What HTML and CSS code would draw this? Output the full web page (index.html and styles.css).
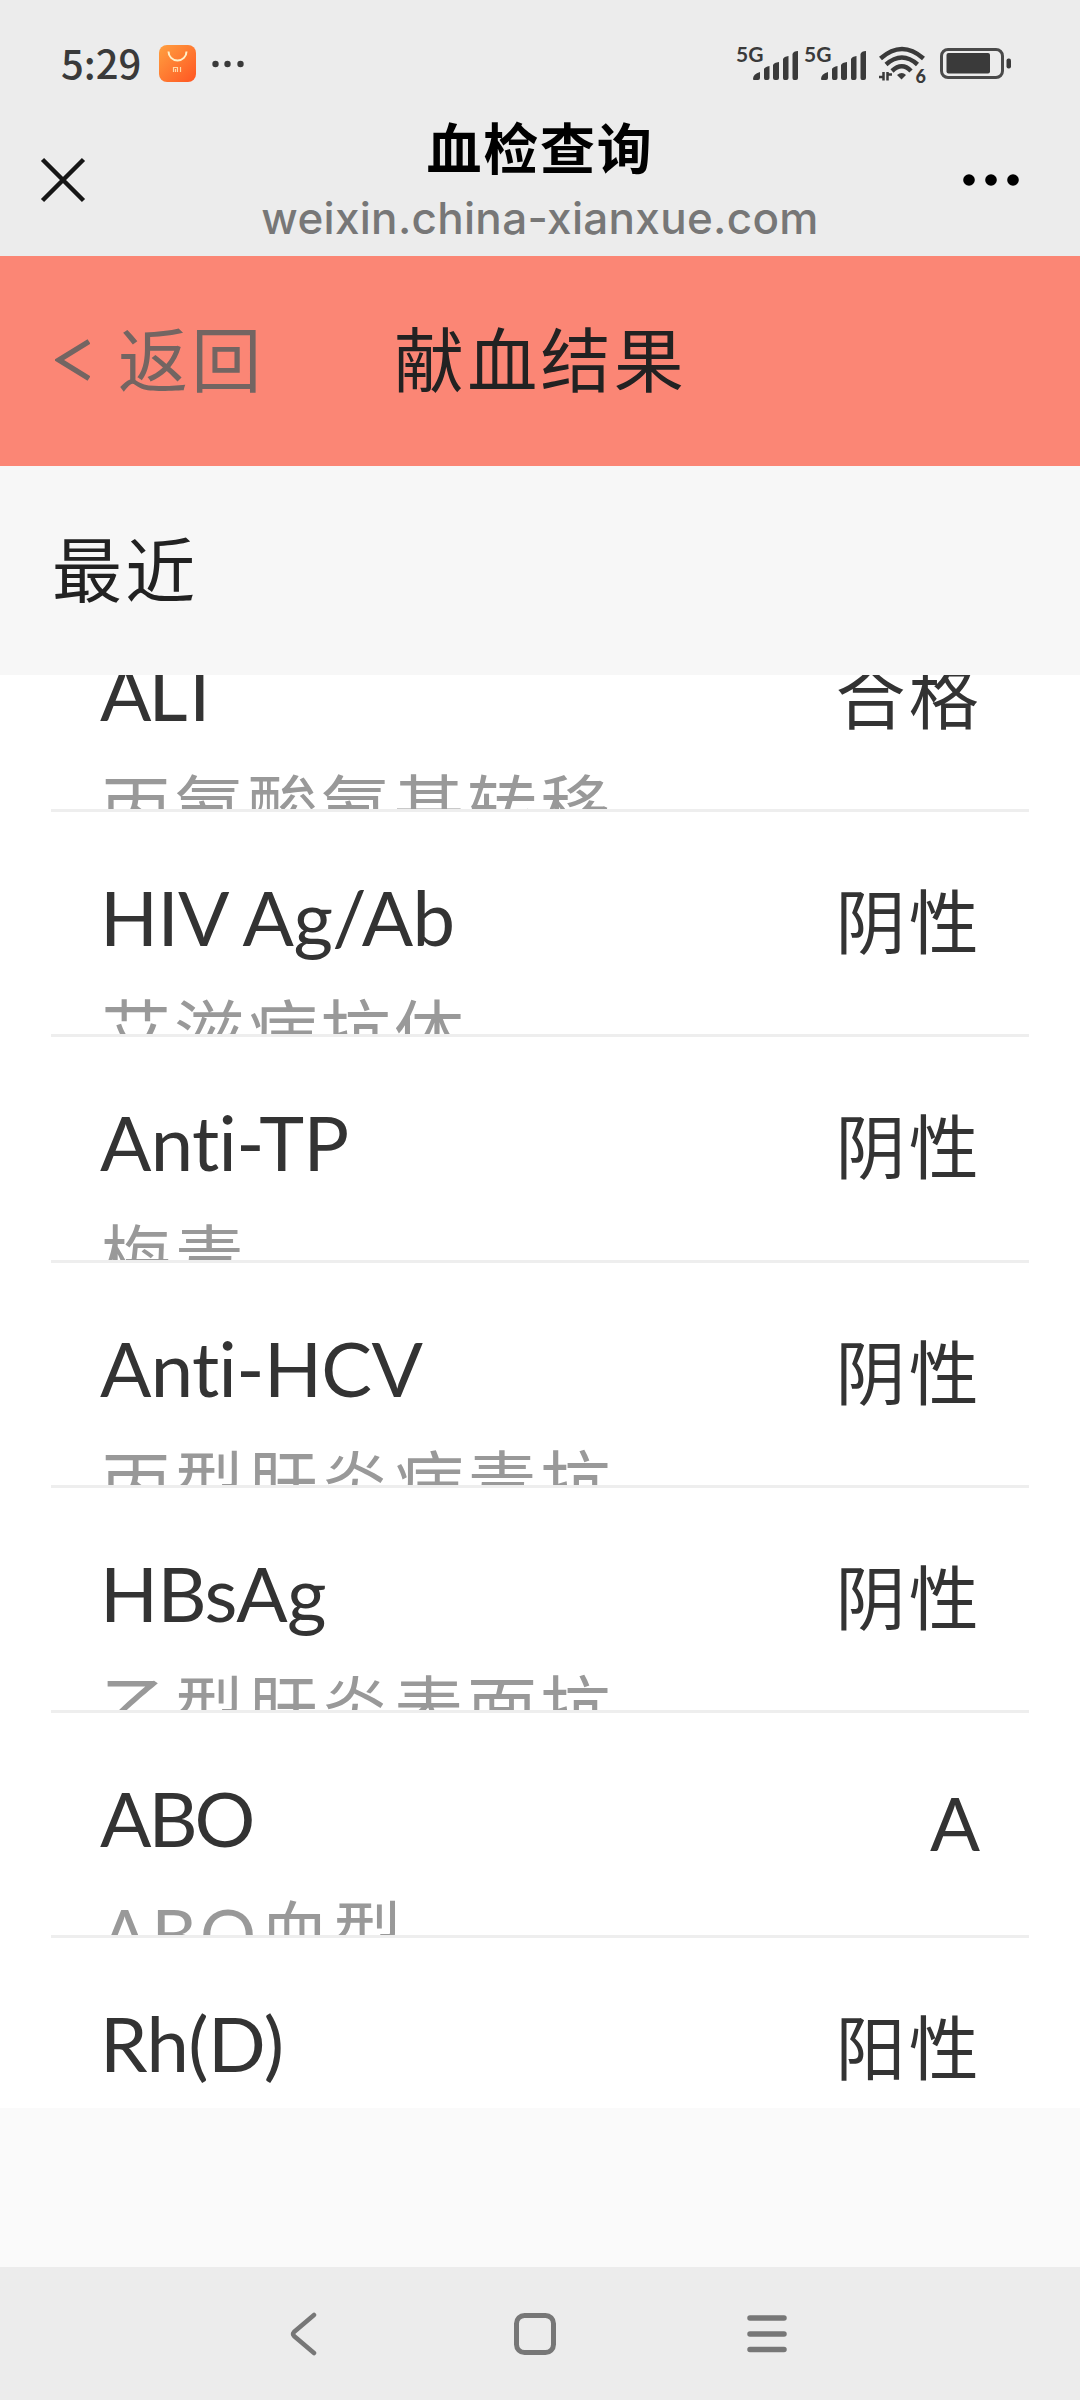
FILE: index.html
```html
<!DOCTYPE html>
<html lang="zh-CN">
<head>
    <meta charset="UTF-8">
    <meta name="viewport" content="width=device-width, initial-scale=1.0">
    <title>血检查询</title>
    <link rel="stylesheet" href="styles.css">
</head>
<body>
    <div class="status-bar">
        <span class="time">5:29</span>
        <svg class="app-icon" width="37" height="37" viewBox="0 0 37 37">
            <defs>
                <linearGradient id="orange" x1="0" y1="0" x2="1" y2="1">
                    <stop offset="0" stop-color="#ffa040"/>
                    <stop offset="1" stop-color="#ff5522"/>
                </linearGradient>
            </defs>
            <rect width="37" height="37" rx="8" fill="url(#orange)"/>
            <path d="M9.5 6.5a9 9 0 0 0 18 0" fill="none" stroke="#fff0c8" stroke-width="2"/>
            <path d="M14.5 27v-4.500h4v4.500M16.500 24v3M21.500 22v5" fill="none" stroke="#ffd9a8" stroke-width="1.200"/>
        </svg>
        <svg class="more-icon" width="32" height="8" viewBox="0 0 32 8" fill="#3a3a3a">
            <circle cx="3.500" cy="4" r="3.200"/><circle cx="15.500" cy="4" r="3.200"/><circle cx="28.500" cy="4" r="3.200"/>
        </svg>
        <div class="status-right">
            <div class="signal">
                <span>5G</span>
                <svg width="46" height="30" viewBox="0 0 46 30" fill="#3a3a3a">
                    <path d="M0 28q0-5 7-7v6q0 2-2 2H1q-1 0-1-1zM11 18q1-2 5.500-3v12q0 2-2 2h-2q-1.500 0-1.500-2zM20 14q1-2.500 6-3v16q0 2-2 2h-2q-2 0-2-2zM30 8q1-2.500 5.500-3v22q0 2-2 2h-2q-1.500 0-1.500-2zM39.500 3q1-3 5.500-3v27q0 2-2 2h-2q-1.500 0-1.500-2z"/>
                </svg>
            </div>
            <div class="signal">
                <span>5G</span>
                <svg width="46" height="30" viewBox="0 0 46 30" fill="#3a3a3a">
                    <path d="M0 28q0-5 7-7v6q0 2-2 2H1q-1 0-1-1zM11 18q1-2 5.500-3v12q0 2-2 2h-2q-1.500 0-1.500-2zM20 14q1-2.500 6-3v16q0 2-2 2h-2q-2 0-2-2zM30 8q1-2.500 5.500-3v22q0 2-2 2h-2q-1.500 0-1.500-2zM39.500 3q1-3 5.500-3v27q0 2-2 2h-2q-1.500 0-1.500-2z"/>
                </svg>
            </div>
            <div class="wifi">
                <svg width="46" height="36" viewBox="0 0 46 36">
                    <g fill="none" stroke="#3a3a3a" stroke-width="4.500">
                        <path d="M1.500 12.500Q23-6.500 44.500 12.500"/>
                        <path d="M7 18.500Q23 4.500 38.500 18.500"/>
                        <path d="M13 25Q23 15.500 32 25"/>
                    </g>
                    <path d="M18 29q5-4 9 0l-4.500 4.500z" fill="#3a3a3a"/>
                    <path d="M4.500 26v8.500M0 31h5M8.500 26v8.500M8 28.500h5" stroke="#3a3a3a" stroke-width="2.500"/>
                </svg>
                <span>6</span>
            </div>
            <svg width="71" height="32" viewBox="0 0 71 32">
                <rect x="1.500" y="1.500" width="61" height="28" rx="6.500" fill="none" stroke="#4a4a4a" stroke-width="3"/>
                <rect x="6.500" y="5" width="43.500" height="20.500" rx="2" fill="#3a3a3a"/>
                <rect x="66.500" y="10.500" width="4.500" height="10" rx="2" fill="#3a3a3a"/>
            </svg>
        </div>
    </div>

    <div class="title-bar">
        <svg width="46" height="46" viewBox="0 0 46 46">
            <path d="M2.500 2.500l41 41M43.500 2.500l-41 41" stroke="#161616" stroke-width="4.500"/>
        </svg>
        <div class="title-text">
            <h1>血检查询</h1>
            <p>weixin.china-xianxue.com</p>
        </div>
        <svg width="58" height="14" viewBox="0 0 58 14">
            <circle cx="7" cy="7" r="5.800"/><circle cx="29" cy="7" r="5.800"/><circle cx="51" cy="7" r="5.800"/>
        </svg>
    </div>

    <div class="nav-header">
        <a class="back"><svg width="35" height="42" viewBox="0 0 35 42"><path d="M34 2.500L4 21l30 18.500" fill="none" stroke="#736562" stroke-width="5.500"/></svg>返回</a>
        <h2>献血结果</h2>
    </div>

    <div class="section">最近</div>

    <div class="list">
        <ul class="results">
            <li>
                <div class="item"><p class="name tight">ALT</p><p class="desc">丙氨酸氨基转移</p></div>
                <span class="value">合格</span>
            </li>
            <li>
                <div class="item"><p class="name">HIV Ag/Ab</p><p class="desc">艾滋病抗体</p></div>
                <span class="value">阴性</span>
            </li>
            <li>
                <div class="item"><p class="name">Anti-TP</p><p class="desc">梅毒</p></div>
                <span class="value">阴性</span>
            </li>
            <li>
                <div class="item"><p class="name">Anti-HCV</p><p class="desc">丙型肝炎病毒抗</p></div>
                <span class="value">阴性</span>
            </li>
            <li>
                <div class="item"><p class="name">HBsAg</p><p class="desc">乙型肝炎表面抗</p></div>
                <span class="value">阴性</span>
            </li>
            <li>
                <div class="item"><p class="name tight">ABO</p><p class="desc">ABO血型</p></div>
                <span class="value latin">A</span>
            </li>
            <li>
                <div class="item"><p class="name">Rh(D)</p></div>
                <span class="value">阳性</span>
            </li>
        </ul>
    </div>

    <div class="system-nav">
        <svg width="28" height="44" viewBox="0 0 28 44"><path d="M25 3L5 20q-2 2 0 4l20 17" fill="none" stroke="#777" stroke-width="4.500" stroke-linecap="round"/></svg>
        <svg class="home" width="42" height="42" viewBox="0 0 42 42"><rect x="2.500" y="2.500" width="37" height="37" rx="8" fill="none" stroke="#777" stroke-width="5"/></svg>
        <svg width="40" height="38" viewBox="0 0 40 38"><path d="M3 3h34M3 19h34M3 34.500h34" stroke="#777" stroke-width="5.500" stroke-linecap="round"/></svg>
    </div>
</body>
</html>
```
FILE: styles.css
```css
* {
    box-sizing: border-box;
    margin: 0;
    padding: 0;
}

body {
    width: 1080px;
    height: 2400px;
    display: flex;
    flex-direction: column;
    overflow: hidden;
    background: #fafafa;
    color: #333;
    font-family: "Lato", "Noto Sans CJK SC", sans-serif;
}

svg {
    display: block;
    flex: none;
}

/* status bar */
.status-bar {
    height: 106px;
    padding: 21px 69px 0 61px;
    display: flex;
    align-items: center;
    background: #ececec;
    color: #3a3a3a;
}

.time {
    width: 98px;
    padding-bottom: 4px;
    font-family: "Noto Sans CJK SC", sans-serif;
    font-weight: 500;
    font-size: 40px;
    line-height: 60px;
}

.more-icon {
    margin-left: 16px;
}

.status-right {
    margin-left: auto;
    display: flex;
    align-items: center;
}

.signal {
    width: 68px;
    height: 34px;
    display: flex;
    align-items: flex-end;
}

.signal span {
    width: 16px;
    height: 34px;
    margin-left: -1px;
    margin-right: 1px;
    font-size: 21px;
    line-height: 14px;
    font-weight: 700;
}

.wifi {
    position: relative;
    margin: 0 15px 0 6px;
}

.wifi span {
    position: absolute;
    right: -1px;
    bottom: -2px;
    font-size: 18px;
    line-height: 16px;
    font-weight: 900;
    background: #ececec;
}

/* browser title bar */
.title-bar {
    height: 150px;
    padding: 0 60px 3px 40px;
    display: grid;
    grid-template-columns: 100px 1fr 80px;
    align-items: center;
    background: #ececec;
}

.title-bar > svg:last-child {
    justify-self: end;
}

.title-text {
    text-align: center;
}

.title-text h1 {
    font-size: 55px;
    line-height: 74px;
    letter-spacing: 1.8px;
    font-weight: 700;
    color: #000;
}

.title-text p {
    padding-top: 2px;
    font-family: "Inter", sans-serif;
    font-size: 44px;
    line-height: 62px;
    font-weight: 500;
    letter-spacing: 0.3px;
    color: #777;
}

/* page header */
.nav-header {
    height: 210px;
    padding: 0 54px 10px 55px;
    display: grid;
    grid-template-columns: 1fr auto 1fr;
    align-items: center;
    background: #fb8675;
}

.back {
    display: flex;
    align-items: center;
    gap: 28px;
    color: #736562;
    font-size: 70px;
    letter-spacing: 3.2px;
}

.back svg {
    margin-top: 8px;
}

.nav-header h2 {
    font-size: 70px;
    font-weight: 400;
    letter-spacing: 3.2px;
    color: #222;
}

.section {
    height: 209px;
    padding: 0 52px;
    font-size: 70px;
    line-height: 208px;
    letter-spacing: 3.2px;
    background: #f7f7f7;
    color: #222;
}

/* results */
.list {
    height: 1433px;
    overflow: hidden;
    background: #fff;
}

.results {
    list-style: none;
    margin: -88px 51px 0;
}

.results li {
    height: 225.2px;
    padding: 0 47px 0 50px;
    display: flex;
    justify-content: space-between;
    border-bottom: 3px solid #eee;
    overflow: hidden;
}

.item {
    padding-top: 49px;
}

.name,
.desc {
    height: 112px;
    line-height: 112px;
    white-space: nowrap;
}

.name {
    margin-left: -1px;
    font-size: 76px;
    letter-spacing: -0.6px;
}

.tight {
    letter-spacing: -3px;
}

.desc {
    margin-top: 3px;
    font-size: 70px;
    letter-spacing: 3.2px;
    color: #999;
}

.value {
    font-size: 70px;
    line-height: 220px;
    letter-spacing: 3.2px;
}

.latin {
    font-size: 74px;
    letter-spacing: 2px;
}

/* system navigation */
.system-nav {
    margin-top: auto;
    height: 133px;
    padding: 0 293px 0 289px;
    display: flex;
    align-items: center;
    justify-content: space-between;
    background: #ececec;
}

.home {
    margin-left: 6px;
}
```
